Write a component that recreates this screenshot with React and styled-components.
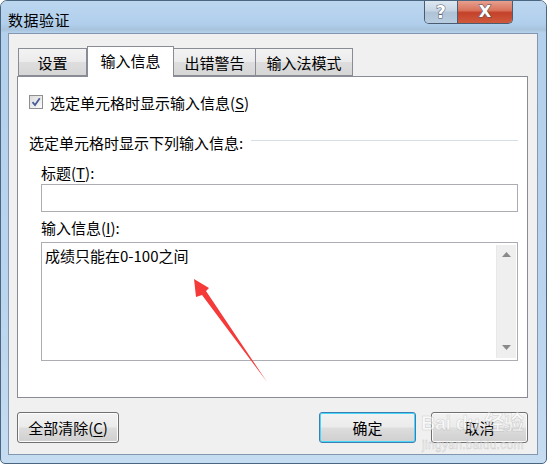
import React from "react";
import styled, { createGlobalStyle } from "styled-components";

const Global = createGlobalStyle`
  html, body { margin: 0; padding: 0; background: #fff; }
  body { font-family: "Noto Sans CJK SC", "Noto Sans", sans-serif; }
`;

const Window = styled.div`
  position: relative;
  width: 547px;
  height: 464px;
  box-sizing: border-box;
  border: 1px solid #4b6680;
  border-radius: 7px 7px 5px 5px;
  background: linear-gradient(180deg, #c4dbf1 0%, #b3d0ec 8%, #b9d4ee 60%, #c6dcf1 100%);
  display: flex;
  flex-direction: column;
  overflow: hidden;
  color: #000;
`;

const TitleBar = styled.div`
  height: 32px;
  display: flex;
  justify-content: space-between;
  padding: 0 33px 0 7px;
  background: linear-gradient(180deg, #bcd6ef 0%, #b1cfec 70%, #a8c3dc 90%, #b7d2ec 100%);
`;

const Title = styled.div`
  font-size: 15px;
  line-height: 15px;
  padding-top: 11px;
  letter-spacing: 0.5px;
`;

const Controls = styled.div`
  display: flex;
  height: 23px;
  margin-top: -1px;
  border: 1px solid #4b5c72;
  border-top: none;
  border-radius: 0 0 5px 5px;
  overflow: hidden;
`;

const CtrlBtn = styled.div`
  width: ${(p) => p.$w}px;
  display: flex;
  align-items: center;
  justify-content: center;
  font-family: "DejaVu Sans", sans-serif;
  font-weight: bold;
  font-size: ${(p) => p.$fs}px;
  line-height: 1;
  padding-top: 1px;
  color: #fff;
  -webkit-text-stroke: 1px #4b5566;
  paint-order: stroke fill;
  background: ${(p) =>
    p.$close
      ? "linear-gradient(180deg, #e8a493 0%, #d9735d 45%, #c4412a 55%, #cf5a3c 100%)"
      : "linear-gradient(180deg, #dfe9f3 0%, #c7d6e5 45%, #afc2d6 55%, #b9cde1 100%)"};
  & + & { border-left: 1px solid #4b5c72; }
`;

const Client = styled.div`
  flex: 1;
  margin: 0 8px 8px 7px;
  background: #f0f0f0;
  border: 1px solid #8398b0;
  padding: 12px 9px 11px 8px;
  display: flex;
  flex-direction: column;
`;

const TabRow = styled.div`
  display: flex;
  align-items: flex-end;
  height: 30px;
  padding-left: 1px;
  position: relative;
  z-index: 1;
`;

const Tab = styled.div`
  width: ${(p) => p.$w}px;
  box-sizing: border-box;
  height: ${(p) => (p.$active ? 31 : 28)}px;
  margin-bottom: ${(p) => (p.$active ? -1 : 0)}px;
  border: 1px solid #898c95;
  border-bottom: ${(p) => (p.$active ? "none" : "1px solid #898c95")};
  ${(p) => (p.$active ? "" : "border-left: none;")}
  ${(p) => (p.$first ? "border-left: 1px solid #898c95;" : "")}
  background: ${(p) =>
    p.$active ? "#fff" : "linear-gradient(180deg, #f3f3f3 0%, #ebebeb 50%, #dedede 51%, #d6d6d6 100%)"};
  font-size: 15px;
  display: flex;
  justify-content: center;
  align-items: center;
  padding-bottom: ${(p) => (p.$active ? 3 : 0)}px;
`;

const Panel = styled.div`
  height: 322px;
  box-sizing: border-box;
  background: #fff;
  border: 1px solid #898c95;
  padding: 0 9px 0 11px;
  display: flex;
  flex-direction: column;
`;

const Row = styled.div`
  display: flex;
  align-items: center;
  height: 20px;
  margin-top: ${(p) => p.$mt}px;
  padding-left: ${(p) => p.$indent || 0}px;
  font-size: 15px;
  gap: 7px;
  white-space: nowrap;
`;

const Box = styled.div`
  width: 14px;
  height: 14px;
  box-sizing: border-box;
  border: 1px solid #8e8f8f;
  background: linear-gradient(135deg, #dcdcdc, #fbfbfb);
  display: flex;
  align-items: center;
  justify-content: center;
`;

const Rule = styled.div`
  flex: 1;
  height: 1px;
  background: #d5dfe5;
  margin-left: 1px;
  margin-top: -3px;
`;

const U = styled.span`
  text-decoration: underline;
  text-underline-offset: 2px;
`;

const Field = styled.div`
  margin-left: 12px;
  margin-top: ${(p) => p.$mt}px;
  height: ${(p) => p.$h}px;
  box-sizing: border-box;
  border: 1px solid #abadb3;
  background: #fff;
  display: flex;
  padding: ${(p) => (p.$multi ? "2px 1px 2px 3px" : "0")};
`;

const FieldText = styled.div`
  flex: 1;
  font-size: 15px;
  line-height: 22px;
`;

const Scroll = styled.div`
  width: 20px;
  background: #efefef;
  border-left: 1px solid #e8e8e8;
  display: flex;
  flex-direction: column;
  justify-content: space-between;
  align-items: center;
  padding: 7px 0 8px;
  box-sizing: border-box;
`;

const ButtonRow = styled.div`
  display: flex;
  margin-top: 14px;
  gap: 15px;
`;

const Button = styled.div`
  width: ${(p) => p.$w}px;
  height: 31px;
  box-sizing: border-box;
  border: 1px solid ${(p) => (p.$default ? "#3c7fb1" : "#707070")};
  border-radius: 3px;
  background: linear-gradient(180deg, #f2f2f2 0%, #ebebeb 48%, #dddddd 52%, #cfcfcf 100%);
  box-shadow: inset 0 0 0 1px ${(p) => (p.$default ? "#48d7fa" : "#fcfcfc")};
  font-size: 15px;
  display: flex;
  align-items: center;
  justify-content: center;
  margin-left: ${(p) => p.$ml || 0}px;
`;

const Overlay = styled.svg`
  position: absolute;
  left: 0;
  top: 0;
  pointer-events: none;
`;

const Watermark = styled.div`
  position: absolute;
  left: 420px;
  top: 412px;
  width: 100px;
  white-space: nowrap;
  color: rgba(255, 255, 255, 0.6);
  -webkit-text-stroke: 0.5px rgba(140, 140, 140, 0.4);
  font-family: "Liberation Sans", "Noto Sans CJK SC", sans-serif;
  pointer-events: none;
  line-height: 1;
`;

const WmBig = styled.div`
  font-size: 20px;
  font-weight: bold;
  letter-spacing: -0.5px;
`;

const WmSmall = styled.div`
  font-size: 12px;
  margin-top: 6px;
  margin-left: 1px;
  letter-spacing: 0.3px;
`;

export default function App() {
  return (
    <>
      <Global />
      <Window>
        <TitleBar>
          <Title>数据验证</Title>
          <Controls>
            <CtrlBtn $w={32} $fs={17}>?</CtrlBtn>
            <CtrlBtn $w={54} $fs={16} $close>X</CtrlBtn>
          </Controls>
        </TitleBar>
        <Client>
          <TabRow>
            <Tab $w={69} $first>设置</Tab>
            <Tab $w={87} $active>输入信息</Tab>
            <Tab $w={82}>出错警告</Tab>
            <Tab $w={97}>输入法模式</Tab>
          </TabRow>
          <Panel>
            <Row $mt={15}>
              <Box>
                <svg width="10" height="10" viewBox="0 0 10 10">
                  <path d="M1.5 5.2 L4 8 L8.8 1.2" fill="none" stroke="#4a5f97" strokeWidth="1.8" />
                </svg>
              </Box>
              <span>
                选定单元格时显示输入信息(<U>S</U>)
              </span>
            </Row>
            <Row $mt={20}>
              <span>选定单元格时显示下列输入信息:</span>
              <Rule />
            </Row>
            <Row $mt={10} $indent={12}>
              <span>
                标题(<U>T</U>):
              </span>
            </Row>
            <Field $mt={2} $h={28} />
            <Row $mt={5} $indent={12}>
              <span>
                输入信息(<U>I</U>):
              </span>
            </Row>
            <Field $mt={5} $h={119} $multi>
              <FieldText>成绩只能在0-100之间</FieldText>
              <Scroll>
                <svg width="9" height="5" viewBox="0 0 9 5">
                  <path d="M0 5 L4.5 0 L9 5 Z" fill="#8a8a8a" />
                </svg>
                <svg width="9" height="5" viewBox="0 0 9 5">
                  <path d="M0 0 L9 0 L4.5 5 Z" fill="#8a8a8a" />
                </svg>
              </Scroll>
            </Field>
          </Panel>
          <ButtonRow>
            <Button $w={102}>
              <span>
                全部清除(<U>C</U>)
              </span>
            </Button>
            <Button $w={97} $ml={185} $default>确定</Button>
            <Button $w={97}>取消</Button>
          </ButtonRow>
        </Client>
        <Overlay width="547" height="464" viewBox="0 0 547 464">
          <polygon
            points="193,278 208,287 205,290 266,381 201,294 195,296"
            fill="#f53a3a"
          />
        </Overlay>
        <Watermark>
          <WmBig>Bai du 经验</WmBig>
          <WmSmall>jingyan.baidu.com</WmSmall>
        </Watermark>
      </Window>
    </>
  );
}
